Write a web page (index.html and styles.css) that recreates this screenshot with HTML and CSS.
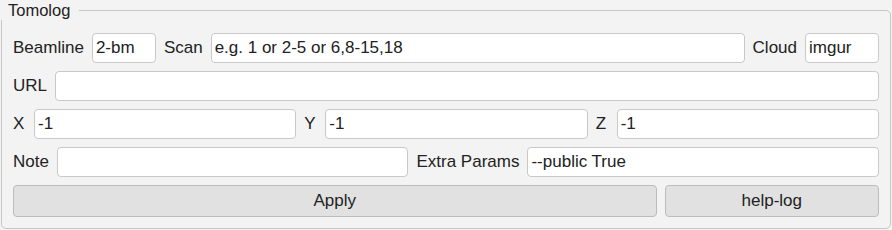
FILE: index.html
```html
<!DOCTYPE html>
<html>
<head>
<meta charset="utf-8">
<link rel="stylesheet" href="styles.css">
</head>
<body>
<div class="frame">
  <span class="legend">Tomolog</span>
  <div class="row">
    <label class="lbl">Beamline</label>
    <input class="field w-beam" type="text" value="2-bm">
    <label class="lbl">Scan</label>
    <input class="field grow" type="text" value="e.g. 1 or 2-5 or 6,8-15,18">
    <label class="lbl">Cloud</label>
    <input class="field w-cloud" type="text" value="imgur">
  </div>
  <div class="row">
    <label class="lbl">URL</label>
    <input class="field grow" type="text" value="">
  </div>
  <div class="row">
    <label class="lbl axis">X</label>
    <input class="field grow" type="text" value="-1">
    <label class="lbl axis">Y</label>
    <input class="field grow" type="text" value="-1">
    <label class="lbl axis">Z</label>
    <input class="field grow" type="text" value="-1">
  </div>
  <div class="row">
    <label class="lbl">Note</label>
    <input class="field grow" type="text" value="">
    <label class="lbl">Extra Params</label>
    <input class="field grow" type="text" value="--public True">
  </div>
  <div class="buttons">
    <button class="btn">Apply</button>
    <button class="btn">help-log</button>
  </div>
</div>
</body>
</html>
```
FILE: styles.css
```css
html, body {
  margin: 0;
  padding: 0;
  background: #f3f3f3;
}
body {
  font-family: "Liberation Sans", Arial, sans-serif;
  font-size: 17px;
  color: #222222;
}
.frame {
  position: relative;
  margin: 10px 1px 0 1px;
  border: 1px solid #c6c6c6;
  border-radius: 5px;
  padding: 22px 11px 11px 11px;
  display: flex;
  flex-direction: column;
  gap: 8px;
}
.legend {
  position: absolute;
  top: -11px;
  left: -2px;
  height: 20px;
  line-height: 20px;
  font-size: 16.5px;
  padding: 0 9px 0 8px;
  background: #f3f3f3;
}
.row {
  display: flex;
  align-items: center;
  gap: 8px;
  height: 30px;
}
.lbl {
  white-space: nowrap;
  line-height: 30px;
}
.axis {
  min-width: 13px;
}
.field {
  box-sizing: border-box;
  height: 30px;
  border: 1px solid #c9c9c9;
  border-radius: 4px;
  background: #ffffff;
  padding: 0 3px;
  margin: 0;
  font-family: inherit;
  font-size: 17px;
  color: #222222;
  outline: none;
  min-width: 0;
}
.grow {
  flex: 1 1 0;
}
.w-beam {
  width: 64px;
  flex: none;
}
.w-cloud {
  width: 74px;
  flex: none;
}
.buttons {
  display: grid;
  grid-template-columns: 3fr 1fr;
  gap: 8px;
}
.btn {
  box-sizing: border-box;
  height: 32px;
  margin: 0;
  border: 1px solid #bcbcbc;
  border-radius: 4px;
  background: #e1e1e1;
  font-family: inherit;
  font-size: 17px;
  color: #222222;
  padding: 0;
}
```
